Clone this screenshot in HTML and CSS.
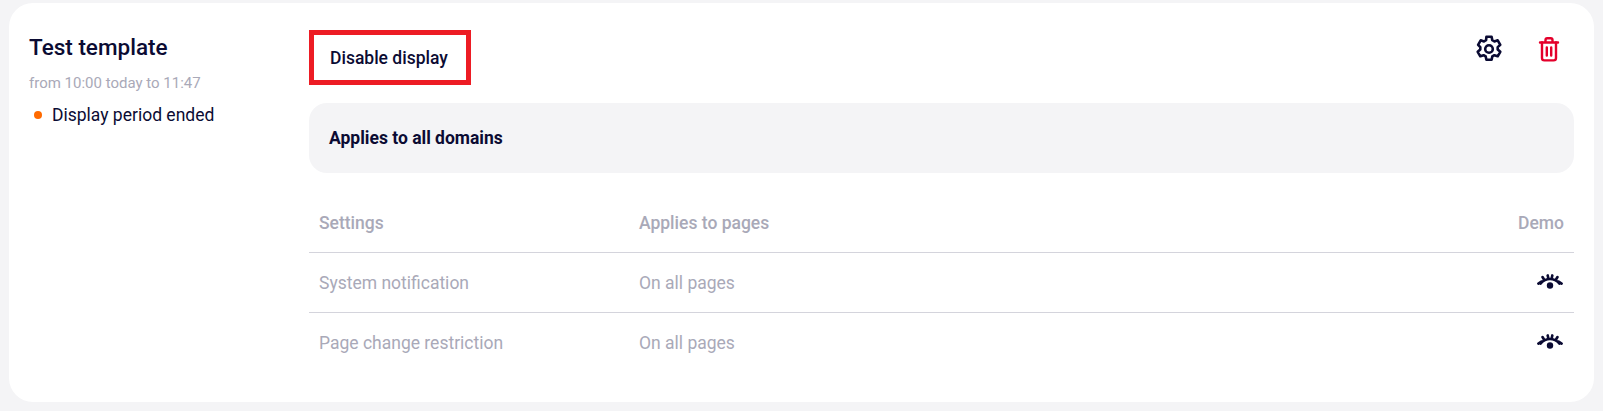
FILE: index.html
```html
<!DOCTYPE html>
<html lang="en">
<head>
    <meta charset="UTF-8">
    <title>Templates</title>
    <link rel="stylesheet" href="styles.css">
</head>
<body>
    <div class="card">
        <div class="card-info">
            <h2>Test template</h2>
            <div class="period">from 10:00 today to 11:47</div>
            <div class="status"><span class="dot"></span>Display period ended</div>
        </div>
        <div class="card-main">
            <div class="toolbar">
                <button class="btn-disable">Disable display</button>
                <div class="actions">
                    <svg class="icon" width="28" height="28" viewBox="0 0 28 28" fill="none" stroke="#0b0b33" stroke-width="2.6" stroke-linejoin="round">
                        <path d="M11.4 1.800h5.200l.7 3.400 2.100 1.200 3.300-1.100 2.600 4.500-2.600 2.300v2.400l2.600 2.300-2.600 4.500-3.300-1.100-2.100 1.200-.7 3.400h-5.200l-.7-3.400-2.100-1.200-3.300 1.100-2.600-4.500 2.600-2.300v-2.400L3.100 9.800l2.600-4.500 3.300 1.100 2.100-1.200z"/>
                        <circle cx="14" cy="14" r="3.800"/>
                    </svg>
                    <svg class="icon" width="28" height="28" viewBox="0 0 28 28" fill="none" stroke="#e4002b" stroke-width="2.400" stroke-linecap="round" stroke-linejoin="round">
                        <path d="M5 7.500h18M10.500 7.500V5c0-1 .8-1.800 1.800-1.800h3.400c1 0 1.800.8 1.800 1.800v2.500"/>
                        <path d="M7 7.500V23c0 1.400 1 2.400 2.400 2.400h9.200c1.400 0 2.400-1 2.400-2.400V7.500"/>
                        <path d="M11.800 12.500v8M16.200 12.500v8"/>
                    </svg>
                </div>
            </div>
            <div class="domains">Applies to all domains</div>
            <table class="settings">
                <thead>
                    <tr>
                        <th class="col-name">Settings</th>
                        <th>Applies to pages</th>
                        <th class="col-demo">Demo</th>
                    </tr>
                </thead>
                <tbody>
                    <tr>
                        <td>System notification</td>
                        <td>On all pages</td>
                        <td class="col-demo">
                            <svg class="eye" width="26" height="16" viewBox="0 0 26 16" fill="none" stroke="#0b0b33" stroke-width="2.6" stroke-linecap="round">
                                <path d="M3.500 9.500C9 3.500 17 3.500 22.500 9.500"/>
                                <path d="M1.400 9.600l3-2M7 5.500L5.500 3M11.200 3.800L10.700 1.400M14.800 3.800L15.300 1.400M19 5.500L20.500 3M21.600 7.600l3 2"/>
                                <circle cx="13" cy="11.500" r="3.200" fill="#0b0b33" stroke="none"/>
                            </svg>
                        </td>
                    </tr>
                    <tr>
                        <td>Page change restriction</td>
                        <td>On all pages</td>
                        <td class="col-demo">
                            <svg class="eye" width="26" height="16" viewBox="0 0 26 16" fill="none" stroke="#0b0b33" stroke-width="2.6" stroke-linecap="round">
                                <path d="M3.500 9.500C9 3.500 17 3.500 22.500 9.500"/>
                                <path d="M1.400 9.600l3-2M7 5.500L5.500 3M11.200 3.800L10.700 1.400M14.800 3.800L15.300 1.400M19 5.500L20.500 3M21.600 7.600l3 2"/>
                                <circle cx="13" cy="11.500" r="3.200" fill="#0b0b33" stroke="none"/>
                            </svg>
                        </td>
                    </tr>
                </tbody>
            </table>
        </div>
    </div>
</body>
</html>
```

FILE: styles.css
```css
* { box-sizing: border-box; }
html, body { height: 100%; }
body { margin: 0; padding: 3px 9px 9px; background: #f4f4f6; font-family: Roboto, Arial, sans-serif; color: #0b0b33; overflow: hidden; }
.card { display: flex; height: 399px; padding: 27px 20px 0; background: #fff; border-radius: 24px; }
.card-info { width: 280px; flex: none; padding-top: 1px; }
.card-info h2 { margin: 0; font-size: 22.5px; line-height: 32px; font-weight: 500; }
.period { margin-top: 10px; font-size: 15px; line-height: 20px; color: #a9a9b8; }
.status { display: flex; align-items: center; margin-top: 10px; font-size: 17.5px; line-height: 24px; }
.dot { width: 8px; height: 8px; margin: 0 10px 0 5px; border-radius: 50%; background: #ff6a00; }
.card-main { flex: 1; min-width: 0; }
.toolbar { display: flex; justify-content: space-between; align-items: flex-start; }
.btn-disable { width: 162px; height: 55px; padding: 0 0 0 16px; background: #fff; border: 5px solid #ed1c24; font-family: inherit; font-size: 17.5px; font-weight: 500; color: inherit; text-align: left; }
.actions { display: flex; gap: 32px; margin-top: 5px; padding-right: 11px; }
.domains { display: flex; align-items: center; height: 70px; margin-top: 18px; padding-left: 20px; background: #f4f4f6; border-radius: 18px; font-size: 17.5px; font-weight: 700; }
.settings { width: 100%; margin-top: 19px; border-collapse: collapse; font-size: 17.5px; color: #a9a9b8; }
.settings th { height: 60px; padding: 3px 10px 0; font-weight: 500; text-align: left; border-bottom: 1px solid #d4d4dc; }
.settings td { height: 60px; padding: 2px 10px 0; }
.settings tbody tr:first-child td { border-bottom: 1px solid #d4d4dc; }
.settings .col-name { width: 320px; }
.settings .col-demo { text-align: right; }
.settings td.col-demo { padding-top: 0; }
.eye { display: block; margin: 0 1px 0 auto; }
```
